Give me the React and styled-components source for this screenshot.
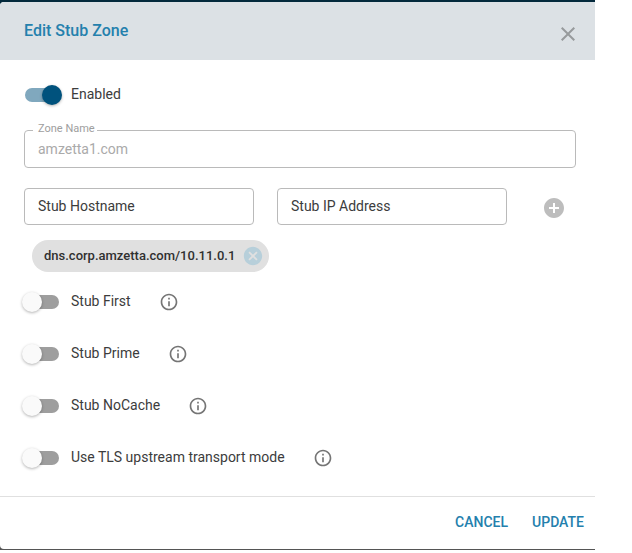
import React, { useState } from "react";
import styled, { createGlobalStyle } from "styled-components";
import { MdClose, MdAddCircle, MdCancel, MdInfoOutline } from "react-icons/md";

const GlobalStyle = createGlobalStyle`
  *, *::before, *::after { box-sizing: border-box; }
  body {
    margin: 0;
    background: #fff;
    color: #3c3c3c;
    font-family: Roboto, "Liberation Sans", sans-serif;
    font-size: 14px;
    line-height: 20px;
  }
  button, input { font: inherit; color: inherit; }
`;

const Backdrop = styled.div`
  margin-right: 37px;
  padding: 2px 0 1px;
  background: linear-gradient(#03293c 50%, #555 50%);
`;

const Dialog = styled.form`
  display: flex;
  flex-direction: column;
  overflow: hidden;
  border-radius: 4px 0 0 4px;
  background: #fff;
`;

const Header = styled.header`
  display: flex;
  justify-content: space-between;
  padding: 17px 15px 14px 24px;
  background: #dce1e5;
`;

const Title = styled.h1`
  margin: 0;
  align-self: flex-start;
  color: #2480ad;
  font-size: 16px;
  font-weight: 500;
  line-height: 24px;
`;

const IconButton = styled.button`
  display: flex;
  align-items: center;
  justify-content: center;
  padding: 0;
  border: 0;
  background: none;
  color: ${(p) => p.$color};
  cursor: pointer;
`;

const CloseButton = styled(IconButton)`
  align-self: flex-end;
  margin-top: 3px;
`;

const Body = styled.div`
  display: flex;
  flex-direction: column;
  padding: 16px 19px 12px 24px;
`;

const SwitchRow = styled.div`
  display: flex;
  align-items: center;
  height: ${(p) => (p.$compact ? 38 : 52)}px;
  padding-left: 1px;
`;

const SwitchLabel = styled.label`
  display: flex;
  align-items: center;
  gap: 12px;
  margin-right: 28px;
  cursor: pointer;
`;

const SwitchText = styled.span`
  padding-bottom: 2px;
`;

const Switch = styled.input`
  appearance: none;
  position: relative;
  width: 34px;
  height: 14px;
  margin: 0;
  border-radius: 7px;
  background: #9e9e9e;
  cursor: pointer;

  &::before {
    content: "";
    position: absolute;
    top: -3px;
    left: -3px;
    width: 20px;
    height: 20px;
    border-radius: 50%;
    background: #fafafa;
    box-shadow: 0 1px 3px rgba(0, 0, 0, 0.3);
  }
  &:checked { background: #80a8be; }
  &:checked::before { left: 17px; background: #00527d; }
`;

const OutlinedField = styled.div`
  position: relative;
  margin: 16px 0 20px;
`;

const FloatingLabel = styled.label`
  position: absolute;
  top: -7px;
  left: 9px;
  padding: 0 2px 0 5px;
  background: #fff;
  color: #9e9e9e;
  font-size: 11px;
  line-height: 12px;
`;

const TextInput = styled.input`
  display: block;
  width: 100%;
  min-width: 0;
  height: ${(p) => (p.$tall ? 38 : 37)}px;
  padding: ${(p) => (p.$tall ? "0 13px" : "0 13px 2px")};
  border: 1px solid #bababa;
  border-radius: 4px;
  background: #fff;

  &::placeholder { color: #3c3c3c; opacity: 1; }
  &:disabled { color: #aaa; }
`;

const StubFields = styled.div`
  display: grid;
  grid-template-columns: 1fr 1fr 46px;
  gap: 23px;
  align-items: center;
  margin-bottom: 15px;
`;

const AddButton = styled(IconButton)`
  padding: 3px 0 0 2px;
`;

const Chip = styled.div`
  display: flex;
  align-items: center;
  align-self: flex-start;
  gap: 7px;
  height: 32px;
  margin: 0 8px 4px;
  padding: 0 5px 0 12px;
  border-radius: 16px;
  background: #e0e0e0;
  color: #303030;
  font-size: 13px;
  font-weight: 500;
`;

const Footer = styled.footer`
  display: flex;
  justify-content: flex-end;
  gap: 8px;
  padding: 8px 3px;
  border-top: 1px solid #e0e0e0;
`;

const TextButton = styled.button`
  height: 36px;
  padding: 0 8px 2px;
  border: 0;
  background: none;
  color: #2480ad;
  font-weight: 500;
  cursor: pointer;
`;

const OPTIONS = ["Stub First", "Stub Prime", "Stub NoCache", "Use TLS upstream transport mode"];

function Toggle({ label, initial = false, compact, info }) {
  const [on, setOn] = useState(initial);
  return (
    <SwitchRow $compact={compact}>
      <SwitchLabel>
        <Switch type="checkbox" role="switch" checked={on} onChange={() => setOn(!on)} />
        <SwitchText>{label}</SwitchText>
      </SwitchLabel>
      {info && (
        <IconButton type="button" $color="#757575" aria-label={`About ${label}`}>
          <MdInfoOutline size={20} />
        </IconButton>
      )}
    </SwitchRow>
  );
}

export default function App() {
  return (
    <>
      <GlobalStyle />
      <Backdrop>
        <Dialog onSubmit={(e) => e.preventDefault()}>
          <Header>
            <Title>Edit Stub Zone</Title>
            <CloseButton type="button" $color="#979a9c" aria-label="Close">
              <MdClose size={24} />
            </CloseButton>
          </Header>
          <Body>
            <Toggle label="Enabled" initial compact />
            <OutlinedField>
              <TextInput id="zone-name" $tall disabled defaultValue="amzetta1.com" />
              <FloatingLabel htmlFor="zone-name">Zone Name</FloatingLabel>
            </OutlinedField>
            <StubFields>
              <TextInput aria-label="Stub Hostname" placeholder="Stub Hostname" />
              <TextInput aria-label="Stub IP Address" placeholder="Stub IP Address" />
              <AddButton type="button" $color="#bdbdbd" aria-label="Add stub">
                <MdAddCircle size={24} />
              </AddButton>
            </StubFields>
            <Chip>
              dns.corp.amzetta.com/10.11.0.1
              <IconButton type="button" $color="#b7cfda" aria-label="Remove stub">
                <MdCancel size={22} />
              </IconButton>
            </Chip>
            {OPTIONS.map((label) => (
              <Toggle key={label} label={label} info />
            ))}
          </Body>
          <Footer>
            <TextButton type="button">CANCEL</TextButton>
            <TextButton type="submit">UPDATE</TextButton>
          </Footer>
        </Dialog>
      </Backdrop>
    </>
  );
}
